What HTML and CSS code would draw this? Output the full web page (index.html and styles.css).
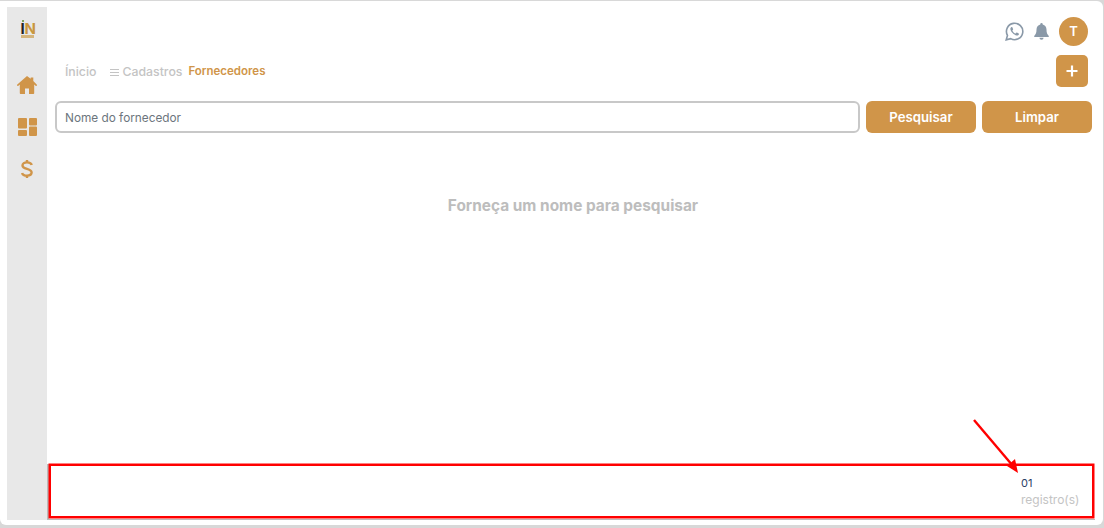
FILE: index.html
```html
<!DOCTYPE html>
<html lang="pt-BR">
<head>
    <meta charset="UTF-8">
    <title>Fornecedores</title>
    <link rel="stylesheet" href="styles.css">
</head>
<body>
    <div class="window">
        <div class="sidebar">
            <div class="logo">
                <div class="logo-dot"></div>
                <div class="logo-mark"><span class="logo-i">I</span><span class="logo-n">N</span></div>
                <div class="logo-bar"></div>
            </div>
            <a href="#" class="side-link">
                <svg width="20" height="18" viewBox="0 0 20 18"><path fill="#d09549" d="M10 0 .3 8.500c-.4.400-.3.900 0 1.200.3.300.8.300 1.100 0l1.400-1.200V17c0 .6.400 1 1 1h4.200v-5.600h4V18h4.200c.6 0 1-.4 1-1V8.500l1.400 1.200c.3.300.8.300 1.100 0 .3-.3.400-.8 0-1.200L16.300 5.100V1.500h-2.600v1.300z"/></svg>
            </a>
            <a href="#" class="side-link">
                <svg width="19" height="18" viewBox="0 0 19 18"><path fill="#d09549" d="M0 1a1 1 0 0 1 1-1h7a1 1 0 0 1 1 1v8.500a1 1 0 0 1-1 1H1a1 1 0 0 1-1-1zM11 1a1 1 0 0 1 1-1h6a1 1 0 0 1 1 1v5.500a1 1 0 0 1-1 1h-6a1 1 0 0 1-1-1zM11 9.500a1 1 0 0 1 1-1h6a1 1 0 0 1 1 1V17a1 1 0 0 1-1 1h-6a1 1 0 0 1-1-1zM0 13a1 1 0 0 1 1-1h7a1 1 0 0 1 1 1v4a1 1 0 0 1-1 1H1a1 1 0 0 1-1-1z"/></svg>
            </a>
            <a href="#" class="side-link">
                <svg width="12" height="20" viewBox="0 0 12 20"><path fill="none" stroke="#d09549" stroke-width="2.400" d="M10.700 6C10.300 4.300 8.500 3.400 6 3.400 3.300 3.400 1.500 4.500 1.500 6.400 1.500 8.400 3.300 9.100 6 9.900c2.800.8 4.600 1.600 4.600 3.700 0 1.900-1.900 3-4.600 3-2.700 0-4.500-.9-4.900-2.700"/><path stroke="#d09549" stroke-width="2.400" d="M6 1v3M6 16v3"/></svg>
            </a>
        </div>
        <div class="main">
            <div class="topbar">
                <svg class="icon-wpp" width="19" height="19" viewBox="0 0 20 20"><path fill="none" stroke="#8a99a8" stroke-width="1.700" d="M1.300 18.700l1.300-4.600A8.600 8.600 0 1 1 6 17.500z"/><path fill="#8a99a8" d="M7 5.200c-.9.400-1.500 1.400-1.300 2.500.4 2.700 3.600 6 6.500 6.500 1.100.2 2.200-.5 2.500-1.400.1-.4 0-.6-.3-.8l-1.800-.9c-.3-.1-.5 0-.7.200l-.7.900c-1.500-.5-2.800-1.800-3.500-3.300l.7-.8c.2-.2.200-.4.100-.7L7.700 5.500c-.2-.3-.4-.4-.7-.3z"/></svg>
                <svg class="icon-bell" width="15" height="17" viewBox="0 0 16 18"><path fill="#8a99a8" d="M8 0a1.300 1.300 0 0 0-1.300 1.400C4.200 2 2.700 4 2.700 6.600c0 4-1 5.600-2.500 7.200-.3.400 0 1 .5 1h14.600c.5 0 .8-.6.500-1-1.500-1.600-2.500-3.200-2.500-7.200 0-2.600-1.500-4.600-4-5.200A1.300 1.300 0 0 0 8 0zM5.800 15.700a2.200 2.200 0 0 0 4.400 0z"/></svg>
                <div class="avatar">T</div>
            </div>
            <div class="crumbs-row">
                <div class="crumbs">
                    <a href="#" class="crumb crumb-home">Ínicio</a>
                    <a href="#" class="crumb"><span class="crumb-icon"></span>Cadastros</a>
                    <a href="#" class="crumb crumb-active">Fornecedores</a>
                </div>
                <button class="btn-add">
                    <svg width="12" height="12" viewBox="0 0 12 12"><path stroke="#fff" stroke-width="2.200" d="M6 .5v11M.5 6h11"/></svg>
                </button>
            </div>
            <div class="search-row">
                <input class="search-input" type="text" placeholder="Nome do fornecedor">
                <button class="btn">Pesquisar</button>
                <button class="btn">Limpar</button>
            </div>
            <div class="empty">Forneça um nome para pesquisar</div>
            <div class="footer">
                <div class="count">
                    <div class="count-num">01</div>
                    <div class="count-label">registro(s)</div>
                </div>
            </div>
        </div>
    </div>
    <div class="mark-box"></div>
    <svg class="mark-arrow" width="60" height="60" viewBox="0 0 60 60"><path stroke="#f00" stroke-width="2.400" d="M1 1 40 47"/><path fill="#f00" d="M45 54 34 47 42 40z"/></svg>
</body>
</html>
```

FILE: styles.css
```css
* {
    margin: 0;
    padding: 0;
    box-sizing: border-box;
}
html, body {
    height: 100%;
}
body {
    background: #d8d8d8;
    font-family: "Inter", "Open Sans", sans-serif;
    overflow: hidden;
    position: relative;
}
.window {
    height: 524px;
    width: 1103px;
    margin-top: 1px;
    background: #fff;
    border-radius: 0 6px 6px 6px;
    padding: 6px 0 5px 7px;
    display: flex;
}
.sidebar {
    width: 40px;
    background: #e8e8e8;
    display: flex;
    flex-direction: column;
    align-items: center;
    flex-shrink: 0;
}
.logo {
    height: 32px;
    margin-top: 13px;
    width: 13px;
}
.logo-dot {
    width: 2px;
    height: 2px;
    margin-left: 1px;
    background: #7fa35c;
}
.logo-mark {
    display: flex;
    height: 11px;
    margin-top: 1px;
    font-size: 15px;
    line-height: 11px;
    font-weight: 700;
}
.logo-i {
    color: #222;
    width: 4px;
}
.logo-n {
    color: #c9973f;
}
.logo-bar {
    height: 3px;
    margin-top: 1px;
    background: #d4b47c;
}
.side-link {
    height: 42px;
    display: flex;
    align-items: center;
    justify-content: center;
}
.side-link:first-of-type {
    margin-top: 12px;
}
.main {
    flex: 1;
    padding: 10px 8px 0 8px;
    display: flex;
    flex-direction: column;
    min-width: 0;
}
.topbar {
    display: flex;
    justify-content: flex-end;
    align-items: center;
    height: 29px;
    padding-right: 7px;
    margin-bottom: 9px;
}
.icon-wpp {
    margin-right: 10px;
}
.icon-bell {
    margin-right: 10px;
}
.avatar {
    width: 29px;
    height: 29px;
    border-radius: 50%;
    background: #d09549;
    color: #fff;
    font-size: 13px;
    font-weight: 600;
    text-align: center;
    line-height: 29px;
}
.crumbs-row {
    display: flex;
    justify-content: space-between;
    align-items: center;
    height: 32px;
    padding-left: 10px;
    padding-right: 7px;
}
.crumbs {
    display: flex;
    align-items: center;
    font-size: 12.300px;
    font-weight: 500;
    color: #c4c4c4;
}
.crumb {
    color: #c4c4c4;
    text-decoration: none;
    margin-right: 6px;
}
.crumb-home {
    margin-right: 14px;
}
.crumb-icon {
    display: inline-block;
    width: 9px;
    height: 7px;
    margin-right: 3px;
    border-top: 1px solid #c4c4c4;
    border-bottom: 1px solid #c4c4c4;
    background: linear-gradient(#c4c4c4, #c4c4c4) center / 100% 1px no-repeat;
}
.crumb-active {
    color: #d09549;
    font-size: 11.500px;
    font-weight: 600;
}
.btn-add {
    width: 32px;
    height: 32px;
    border: 0;
    border-radius: 5px;
    background: #d09549;
    display: flex;
    align-items: center;
    justify-content: center;
}
.search-row {
    display: flex;
    gap: 6px;
    margin-top: 14px;
    height: 32px;
    padding-right: 3px;
}
.search-input {
    flex: 1;
    min-width: 0;
    border: 2px solid #c8c8c8;
    border-radius: 6px;
    padding: 1px 8px 0;
    font-family: inherit;
    font-size: 11.800px;
    color: #6c757d;
    outline: none;
}
.search-input::placeholder {
    color: #6c757d;
    opacity: 1;
}
.btn {
    width: 110px;
    border: 0;
    border-radius: 6px;
    background: #d09549;
    color: #fff;
    font-family: inherit;
    font-size: 13.200px;
    font-weight: 600;
}
.empty {
    margin-top: 64px;
    text-align: center;
    font-size: 15.400px;
    font-weight: 700;
    color: #bdbdbd;
    line-height: 18px;
    padding-right: 4px;
}
.footer {
    margin-top: auto;
    height: 56px;
    margin-left: -8px;
    border-left: 2px solid #bbb;
    border-bottom: 1px solid #bbb;
    display: flex;
    justify-content: flex-end;
}
.count {
    width: 74px;
    padding-top: 12px;
    font-size: 12px;
}
.count-num {
    color: #2c3e66;
    font-size: 11px;
    line-height: 14px;
}
.count-label {
    color: #c4c4c4;
    margin-top: 3px;
    line-height: 14px;
}
.mark-box {
    position: absolute;
    left: 49px;
    top: 464px;
    width: 1045px;
    height: 54px;
    border: 2px solid #f00;
    box-shadow: 0 0 0 .5px #f00;
}
.mark-arrow {
    position: absolute;
    left: 973px;
    top: 419px;
}
```
